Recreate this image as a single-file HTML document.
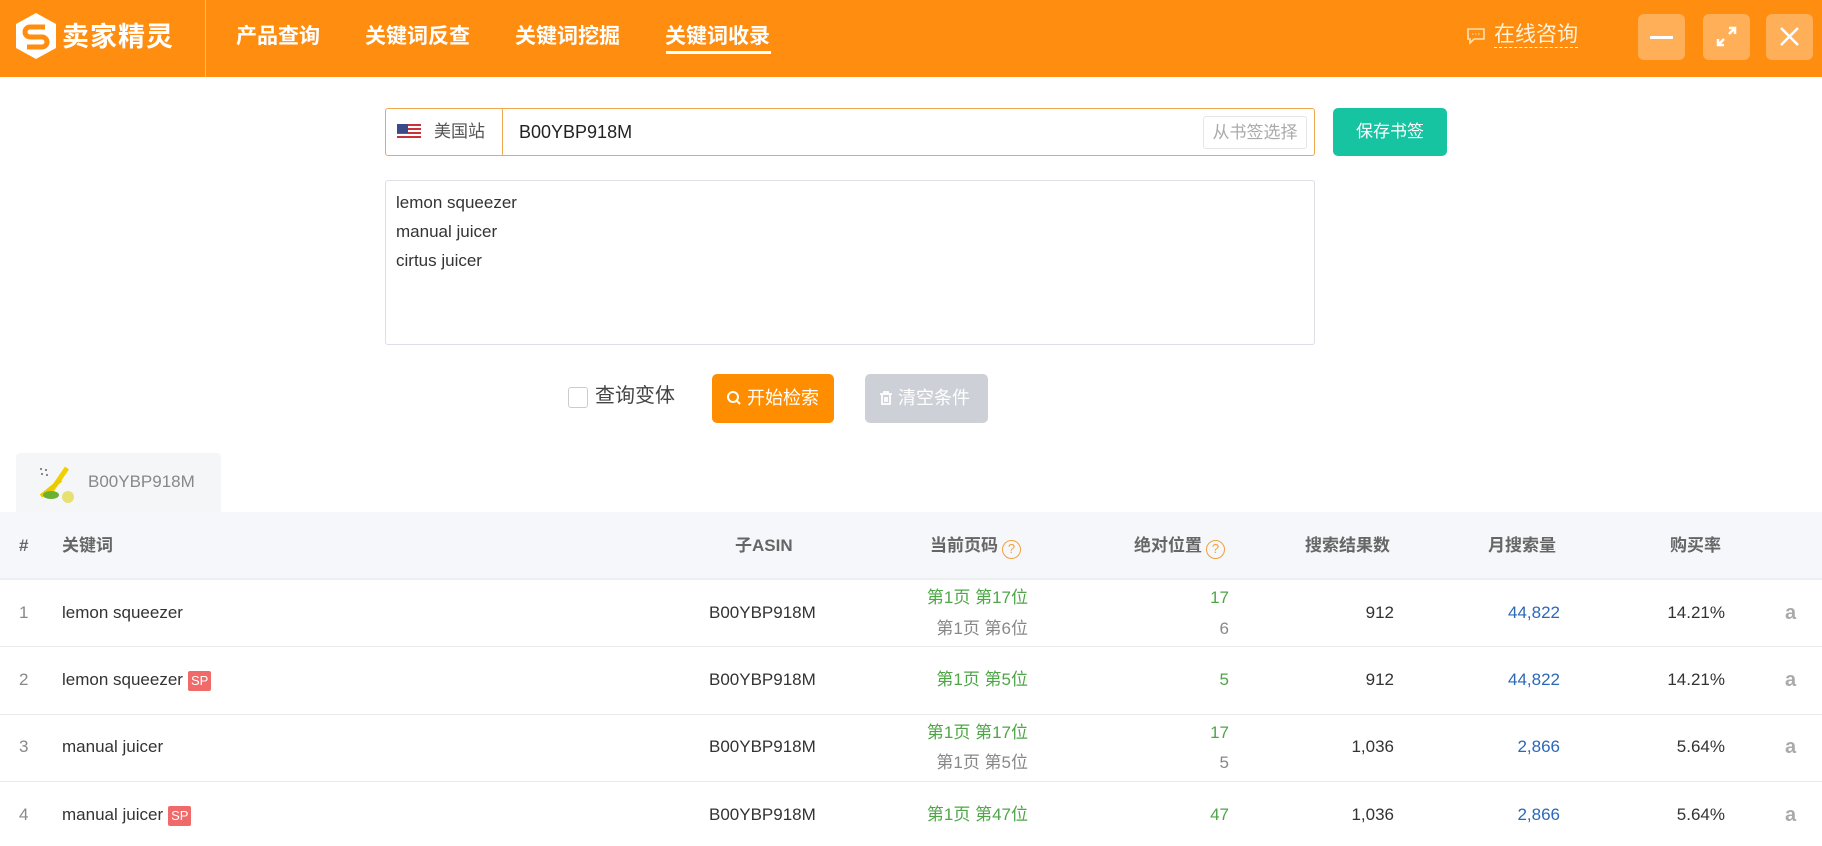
<!DOCTYPE html>
<html><head><meta charset="utf-8"><style>
*{margin:0;padding:0;box-sizing:border-box}
body{width:1822px;height:846px;overflow:hidden;background:#fff;font-family:"Liberation Sans","Noto Sans CJK SC",sans-serif;color:#333;position:relative;line-height:20px}
.a{position:absolute;white-space:nowrap}
.hdr{position:absolute;left:0;top:0;width:1822px;height:77px;background:#ff8d10}
.nav{position:absolute;top:24px;font-size:21px;line-height:26px;font-weight:bold;color:#fff}
.wb{position:absolute;top:14px;width:47px;height:46px;border-radius:6px;background:rgba(255,255,255,.3)}
.th{position:absolute;top:512px;left:0;width:1822px;height:68px;background:#f5f7fa;border-bottom:2px solid #eceef2}
.hc{position:absolute;top:536px;font-size:17px;line-height:20px;font-weight:bold;color:#666}
.row{position:absolute;left:0;width:1822px;border-bottom:1px solid #e8eaee}
.c{position:absolute;font-size:17px;line-height:20px;color:#333;white-space:nowrap}
.g{color:#4ea647}.gr{color:#888}.b{color:#2b68b8}
.q{display:inline-block;width:19px;height:19px;border:1.5px solid #f0a040;border-radius:50%;color:#f0a040;font-size:13px;text-align:center;line-height:16px;font-weight:normal;vertical-align:-2px;margin-left:4px}
.sp{display:inline-block;background:#f06a6a;color:#fff;font-size:13px;line-height:16px;padding:2px 3px;border-radius:2px;margin-left:5px;vertical-align:0}
.am{position:absolute;left:1785px;font-size:20px;line-height:20px;color:#aaa;font-weight:bold}
</style></head><body>
<div class="hdr"></div>
<svg class="a" style="left:16px;top:13px" width="40" height="46" viewBox="0 0 40 46"><polygon points="20,0 40,11 40,35 20,46 0,35 0,11" fill="#fff"/><path d="M29 14 H14 a5 5 0 0 0 0 10 h12 a5 5 0 0 1 0 10 H11" stroke="#ff8d10" stroke-width="5" fill="none"/></svg>
<div class="a" style="left:62px;top:21px;font-size:27px;line-height:32px;font-weight:bold;color:#fff;letter-spacing:1px">卖家精灵</div>
<div class="a" style="left:205px;top:0;width:1px;height:77px;background:rgba(255,255,255,.4)"></div>
<div class="nav" style="left:236px">产品查询</div>
<div class="nav" style="left:365px">关键词反查</div>
<div class="nav" style="left:515px">关键词挖掘</div>
<div class="nav" style="left:665px">关键词收录</div>
<div class="a" style="left:666px;top:51px;width:105px;height:3px;background:#fff"></div>
<svg class="a" style="left:1466px;top:27px" width="20" height="18" viewBox="0 0 20 18"><path d="M2 2h16v10H8l-4 4v-4H2z" fill="none" stroke="#ffe0b0" stroke-width="1.6"/><path d="M6 7h8" stroke="#ffe0b0" stroke-dasharray="1.5 1.5"/></svg>
<div class="a" style="left:1494px;top:23px;font-size:21px;color:#fff2dc;border-bottom:1px dashed #fff2dc;line-height:24px">在线咨询</div>
<div class="wb" style="left:1638px"><div class="a" style="left:12px;top:22px;width:23px;height:3px;background:#fff"></div></div>
<div class="wb" style="left:1703px"><svg class="a" style="left:12px;top:11px" width="23" height="23" viewBox="0 0 23 23" stroke="#fff" stroke-width="2.5" fill="none"><path d="M14 9l6-6M14 3h6v6M9 14l-6 6M3 14v6h6"/></svg></div>
<div class="wb" style="left:1766px"><svg class="a" style="left:12px;top:11px" width="23" height="23" viewBox="0 0 23 23" stroke="#fff" stroke-width="2.5"><path d="M3 3l17 17M20 3L3 20"/></svg></div>

<div class="a" style="left:385px;top:108px;width:930px;height:48px;border:1px solid #f0a850;border-radius:3px"></div>
<div class="a" style="left:502px;top:109px;width:1px;height:46px;background:#f0a850"></div>
<svg class="a" style="left:397px;top:124px" width="24" height="16" viewBox="0 0 24 16"><rect width="24" height="16" fill="#fff"/><g fill="#c8333a"><rect y="0" width="24" height="2"/><rect y="4" width="24" height="2"/><rect y="8" width="24" height="2"/><rect y="12" width="24" height="2"/></g><rect width="11" height="9" fill="#3c4a8a"/></svg>
<div class="a" style="left:434px;top:122px;font-size:17px;color:#555">美国站</div>
<div class="a" style="left:519px;top:122px;font-size:18px;color:#222">B00YBP918M</div>
<div class="a" style="left:1203px;top:116px;width:104px;height:33px;border:1px solid #e6e6e6;border-radius:3px;font-size:17px;color:#aaa;text-align:center;line-height:31px">从书签选择</div>
<div class="a" style="left:1333px;top:108px;width:114px;height:48px;background:#17c4a2;border-radius:5px;color:#fff;font-size:17px;text-align:center;line-height:48px">保存书签</div>

<div class="a" style="left:385px;top:180px;width:930px;height:165px;border:1px solid #dcdfe6;border-radius:3px"></div>
<div class="a" style="left:396px;top:188px;font-size:17px;line-height:29px;color:#333">lemon squeezer<br>manual juicer<br>cirtus juicer</div>

<div class="a" style="left:568px;top:387px;width:20px;height:21px;border:1px solid #ccc;border-radius:3px"></div>
<div class="a" style="left:595px;top:384px;font-size:20px;line-height:24px;color:#444">查询变体</div>
<div class="a" style="left:712px;top:374px;width:122px;height:49px;background:#ff8d00;border-radius:5px;color:#fff;font-size:18px;line-height:49px;padding-left:14px"><svg style="vertical-align:-2px" width="16" height="16" viewBox="0 0 16 16" stroke="#fff" stroke-width="2" fill="none"><circle cx="7" cy="7" r="5"/><path d="M11 11l3 3"/></svg> 开始检索</div>
<div class="a" style="left:865px;top:374px;width:123px;height:49px;background:#cdd0d6;border-radius:5px;color:#fff;font-size:18px;line-height:49px;padding-left:14px"><svg style="vertical-align:-2px" width="14" height="16" viewBox="0 0 14 16" stroke="#fff" stroke-width="1.8" fill="none"><path d="M1 4h12M5 4V2h4v2M3 4v10h8V4M6 7v5M8 7v5"/></svg> 清空条件</div>

<div class="a" style="left:16px;top:453px;width:205px;height:60px;background:#f5f6f8;border-radius:4px 4px 0 0"></div>
<svg class="a" style="left:37px;top:466px" width="40" height="38" viewBox="0 0 40 38"><g fill="#666"><circle cx="4" cy="3" r="1"/><circle cx="9" cy="4" r="1"/><circle cx="5" cy="8" r="1"/><circle cx="10" cy="9" r="1"/></g><path d="M30 2 L12 28" stroke="#f0d000" stroke-width="5"/><path d="M24 14 L4 30" stroke="#e8cc00" stroke-width="4"/><ellipse cx="14" cy="29" rx="8" ry="4" fill="#6bb030"/><circle cx="31" cy="31" r="6" fill="#e8e070"/></svg>
<div class="a" style="left:88px;top:472px;font-size:17px;color:#888">B00YBP918M</div>

<div class="th"></div>
<div class="hc" style="left:19px">#</div>
<div class="hc" style="left:62px">关键词</div>
<div class="hc" style="left:735px">子ASIN</div>
<div class="hc" style="left:930px">当前页码<span class="q">?</span></div>
<div class="hc" style="left:1134px">绝对位置<span class="q">?</span></div>
<div class="hc" style="left:1305px">搜索结果数</div>
<div class="hc" style="left:1488px">月搜索量</div>
<div class="hc" style="left:1670px">购买率</div>

<div class="row" style="top:580px;height:67px"></div>
<div class="row" style="top:647px;height:68px"></div>
<div class="row" style="top:715px;height:67px"></div>

<div class="c gr" style="left:19px;top:603px">1</div>
<div class="c" style="left:62px;top:603px">lemon squeezer</div>
<div class="c" style="left:709px;top:603px">B00YBP918M</div>
<div class="c g" style="right:794px;top:588px">第1页 第17位</div>
<div class="c gr" style="right:794px;top:619px">第1页 第6位</div>
<div class="c g" style="right:593px;top:588px">17</div>
<div class="c gr" style="right:593px;top:619px">6</div>
<div class="c" style="right:428px;top:603px">912</div>
<div class="c b" style="right:262px;top:603px">44,822</div>
<div class="c" style="right:97px;top:603px">14.21%</div>
<div class="am" style="top:603px">a</div>

<div class="c gr" style="left:19px;top:670px">2</div>
<div class="c" style="left:62px;top:670px">lemon squeezer<span class="sp">SP</span></div>
<div class="c" style="left:709px;top:670px">B00YBP918M</div>
<div class="c g" style="right:794px;top:670px">第1页 第5位</div>
<div class="c g" style="right:593px;top:670px">5</div>
<div class="c" style="right:428px;top:670px">912</div>
<div class="c b" style="right:262px;top:670px">44,822</div>
<div class="c" style="right:97px;top:670px">14.21%</div>
<div class="am" style="top:670px">a</div>

<div class="c gr" style="left:19px;top:737px">3</div>
<div class="c" style="left:62px;top:737px">manual juicer</div>
<div class="c" style="left:709px;top:737px">B00YBP918M</div>
<div class="c g" style="right:794px;top:723px">第1页 第17位</div>
<div class="c gr" style="right:794px;top:753px">第1页 第5位</div>
<div class="c g" style="right:593px;top:723px">17</div>
<div class="c gr" style="right:593px;top:753px">5</div>
<div class="c" style="right:428px;top:737px">1,036</div>
<div class="c b" style="right:262px;top:737px">2,866</div>
<div class="c" style="right:97px;top:737px">5.64%</div>
<div class="am" style="top:737px">a</div>

<div class="c gr" style="left:19px;top:805px">4</div>
<div class="c" style="left:62px;top:805px">manual juicer<span class="sp">SP</span></div>
<div class="c" style="left:709px;top:805px">B00YBP918M</div>
<div class="c g" style="right:794px;top:805px">第1页 第47位</div>
<div class="c g" style="right:593px;top:805px">47</div>
<div class="c" style="right:428px;top:805px">1,036</div>
<div class="c b" style="right:262px;top:805px">2,866</div>
<div class="c" style="right:97px;top:805px">5.64%</div>
<div class="am" style="top:805px">a</div>
</body></html>
